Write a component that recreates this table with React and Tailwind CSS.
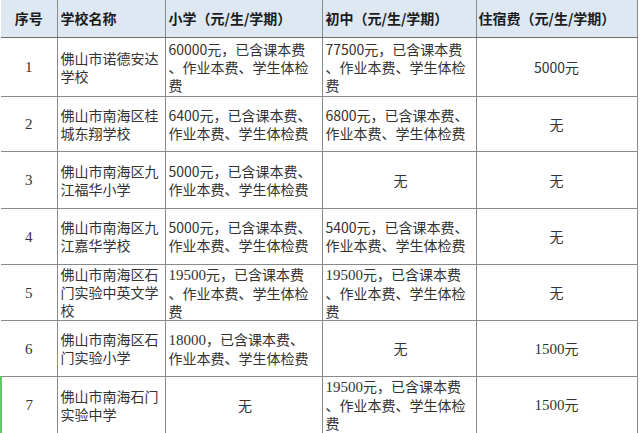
const cjk = { fontFamily: '"Noto Sans CJK SC", "Noto Sans", sans-serif' };
const serif = { fontFamily: '"Liberation Serif", "Noto Sans CJK SC", serif' };

const rows = [
  {
    no: '1', h: 'h-[59px]',
    name: ['佛山市诺德安达', '学校'],
    primary: [['60000元，已含课本费', false], ['、作业本费、学生体检', false], ['费', false]],
    middle: [['77500元，已含课本费', false], ['、作业本费、学生体检', false], ['费', false]],
    board: ['5000元', false],
  },
  {
    no: '2', h: 'h-[55px]',
    name: ['佛山市南海区桂', '城东翔学校'],
    primary: [['6400元，已含课本费、', false], ['作业本费、学生体检费', false]],
    middle: [['6800元，已含课本费、', false], ['作业本费、学生体检费', false]],
    board: ['无', false],
  },
  {
    no: '3', h: 'h-[57px]',
    name: ['佛山市南海区九', '江福华小学'],
    primary: [['5000元，已含课本费、', false], ['作业本费、学生体检费', false]],
    middle: null,
    board: ['无', false],
  },
  {
    no: '4', h: 'h-[56px]',
    name: ['佛山市南海区九', '江嘉华学校'],
    primary: [['5000元，已含课本费、', false], ['作业本费、学生体检费', false]],
    middle: [['5400元，已含课本费、', false], ['作业本费、学生体检费', false]],
    board: ['无', false],
  },
  {
    no: '5', h: 'h-[56px]',
    name: ['佛山市南海区石', '门实验中英文学', '校'],
    primary: [['19500', true, '元，已含课本费'], ['、作业本费、学生体检', false], ['费', false]],
    middle: [['19500', true, '元，已含课本费'], ['、作业本费、学生体检', false], ['费', false]],
    board: ['无', false],
  },
  {
    no: '6', h: 'h-[56px]',
    name: ['佛山市南海区石', '门实验小学'],
    primary: [['18000', true, '，已含课本费、'], ['作业本费、学生体检费', false]],
    middle: null,
    board: ['1500', true],
  },
  {
    no: '7', h: 'h-[57px]', green: true,
    name: ['佛山市南海石门', '实验中学'],
    primary: null,
    middle: [['19500', true, '元，已含课本费'], ['、作业本费、学生体检', false], ['费', false]],
    board: ['1500', true],
  },
];

function Lines({ lines }) {
  if (!lines) {
    return <div className="text-center">无</div>;
  }
  return (
    <div>
      {lines.map(([text, isSerif, rest], i) => (
        <div key={i} className="whitespace-nowrap">
          {isSerif ? (
            <>
              <span style={serif} className="text-[15px]">{text}</span>
              {rest}
            </>
          ) : (
            text
          )}
        </div>
      ))}
    </div>
  );
}

const cell = 'border-r border-b border-[#8a8a8a] align-middle';

export default function App() {
  return (
    <div className="w-[640px] h-[433px] bg-white overflow-hidden" style={cjk}>
      <table className="table-fixed border-collapse w-[636px] text-[14px] leading-[18px] text-[#333]">
        <colgroup>
          <col className="w-[56px]" />
          <col className="w-[108px]" />
          <col className="w-[157px]" />
          <col className="w-[154px]" />
          <col className="w-[161px]" />
        </colgroup>
        <thead>
          <tr className="h-[37px] bg-[#dde8f3] font-bold text-[#1c1c1c]">
            <th className={`${cell} border-b-[#6f6f6f] text-center`}>序号</th>
            <th className={`${cell} border-b-[#6f6f6f] text-left pl-[3px]`}>学校名称</th>
            <th className={`${cell} border-b-[#6f6f6f] text-left pl-[3px]`}>小学（元/生/学期）</th>
            <th className={`${cell} border-b-[#6f6f6f] text-left pl-[3px]`}>初中（元/生/学期）</th>
            <th className={`${cell} border-b-[#6f6f6f] text-left pl-[2px]`}>住宿费（元/生/学期）</th>
          </tr>
        </thead>
        <tbody>
          {rows.map((r) => (
            <tr key={r.no} className={r.h}>
              <td
                className={`${cell} text-center ${r.green ? 'border-l-2 border-l-[#63c36b]' : ''}`}
              >
                <span style={serif} className="text-[15px]">{r.no}</span>
              </td>
              <td className={`${cell} pl-[3px]`}>
                {r.name.map((n, i) => (
                  <div key={i} className="whitespace-nowrap">{n}</div>
                ))}
              </td>
              <td className={`${cell} pl-[3px]`}>
                <Lines lines={r.primary} />
              </td>
              <td className={`${cell} pl-[3px]`}>
                <Lines lines={r.middle} />
              </td>
              <td className={`${cell} text-center`}>
                {r.board[1] ? (
                  <>
                    <span style={serif} className="text-[15px]">{r.board[0]}</span>元
                  </>
                ) : (
                  r.board[0]
                )}
              </td>
            </tr>
          ))}
        </tbody>
      </table>
    </div>
  );
}
